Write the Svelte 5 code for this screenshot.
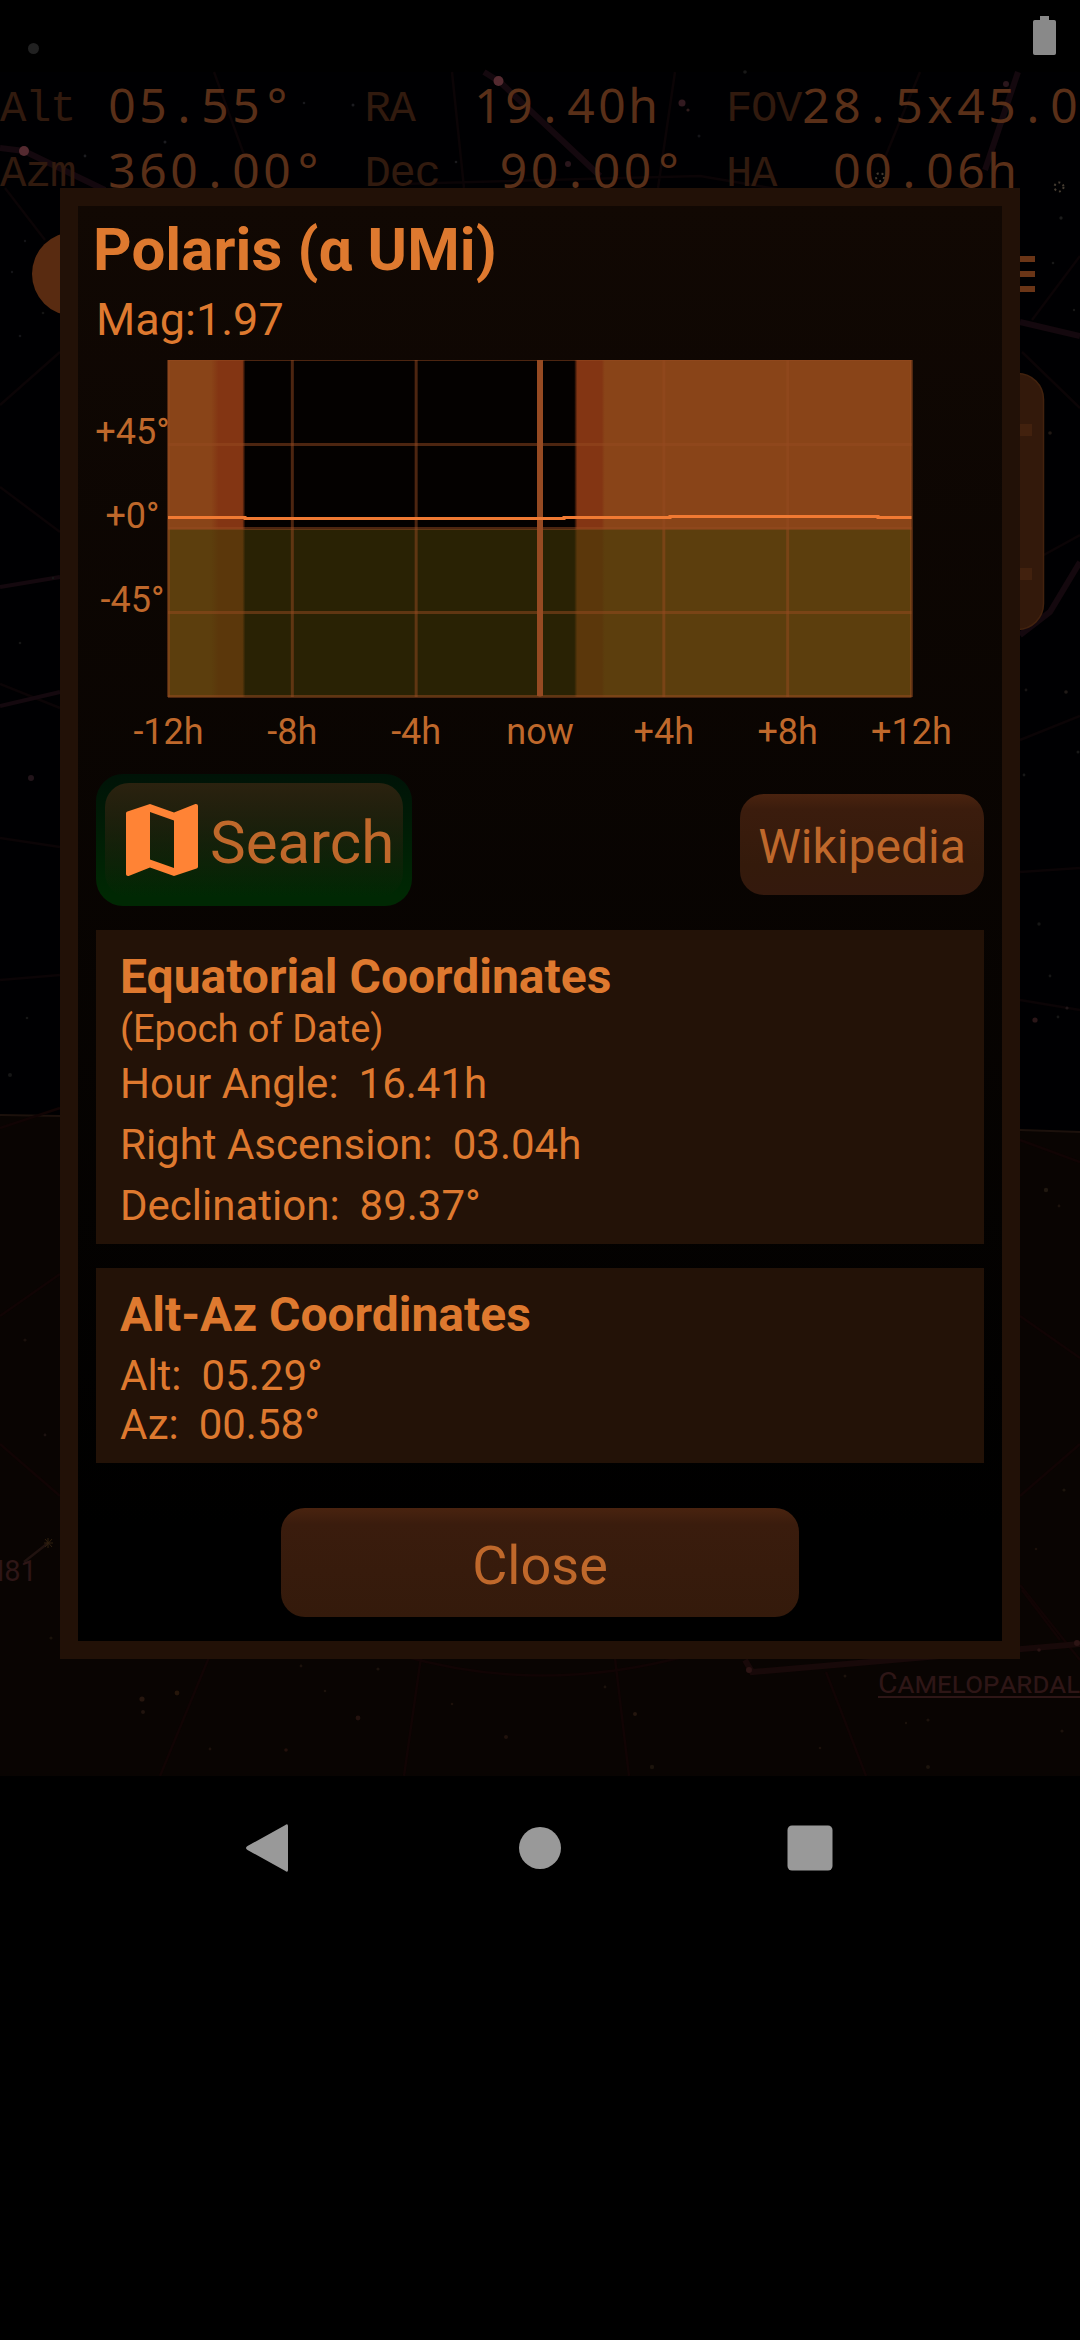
<script>
  const readouts = [
    [
      { label: 'Alt', value: '05.55°', pad: 0 },
      { label: 'RA', value: '19.40h', pad: 0 },
      { label: 'FOV', value: '28.5x45.0', pad: 0 }
    ],
    [
      { label: 'Azm', value: '360.00°', pad: 0 },
      { label: 'Dec', value: '90.00°', pad: 1 },
      { label: 'HA', value: '00.06h', pad: 1 }
    ]
  ];

  const hours = ['-12h', '-8h', '-4h', 'now', '+4h', '+8h', '+12h'].map((text, i) => ({
    text,
    x: 168.5 + i * 123.83
  }));
  const altitudes = [
    { text: '+45°', y: 444.5 },
    { text: '+0°', y: 528.5 },
    { text: '-45°', y: 612.5 }
  ];

  const equatorial = [
    ['Hour Angle:', '16.41h'],
    ['Right Ascension:', '03.04h'],
    ['Declination:', '89.37°']
  ];
  const altaz = [
    ['Alt:', '05.29°'],
    ['Az:', '00.58°']
  ];

  const stars = [
    [165, 142, 1.5, '#1c1c20'], [304, 103, 1.3, '#18181c'], [353, 105, 1.5, '#1c1c20'], [85, 156, 1.4, '#1c1c20'],
    [25, 241, 1.2, '#141418'], [12, 272, 1.2, '#141418'], [43, 313, 1.3, '#141414'], [20, 336, 1.3, '#141418'],
    [456, 162, 1.3, '#1a1a1e'], [688, 110, 1.6, '#301c1c'], [699, 136, 1.5, '#141418'], [745, 72, 1.8, '#181818'],
    [1061, 218, 1.7, '#1c1c1c'], [1053, 263, 1.3, '#181818'], [1074, 310, 1.2, '#181818'], [1050, 433, 1.8, '#201814'],
    [1066, 692, 1.8, '#201a18'], [1026, 690, 1.4, '#181414'], [1024, 775, 1.4, '#181818'], [1078, 752, 1.5, '#181818'],
    [1039, 924, 1.7, '#161616'], [1050, 976, 1.4, '#161616'], [1035, 1020, 2.6, '#2a1618'], [1067, 1008, 1.6, '#201618'],
    [1058, 1017, 1.4, '#161616'], [1046, 1190, 2.2, '#201810'], [1059, 1206, 1.4, '#1c120c'], [31, 778, 3, '#22141a'],
    [53, 578, 1.3, '#161616'], [20, 643, 1.3, '#161616'], [10, 1075, 2, '#161616'], [27, 1018, 1.3, '#161616'],
    [25, 1340, 1.6, '#1a100c'], [45, 1435, 1.4, '#1c1210'], [51, 1638, 1.6, '#1a120a'], [142, 1699, 2.6, '#26160e'],
    [177, 1693, 2.4, '#26160a'], [143, 1712, 2, '#20140e'], [358, 1718, 2.4, '#24120e'], [301, 1666, 1.4, '#1c120c'],
    [378, 1669, 1.6, '#1c120c'], [325, 1691, 1.3, '#1c120c'], [506, 1737, 2, '#20120c'], [635, 1714, 2, '#24160e'],
    [652, 1767, 2.2, '#1c140c'], [845, 1676, 1.5, '#1c120c'], [928, 1720, 1.6, '#1c120c'], [928, 1767, 2, '#1c140c'],
    [1062, 1731, 1.6, '#1c120c'], [286, 1750, 1.8, '#24100c'], [210, 1749, 1.4, '#1c100a'], [605, 1687, 1.4, '#1c120c'],
    [749, 1670, 3, '#2c1414'], [1039, 1650, 1.8, '#2a1414'], [1077, 1643, 3, '#2c1414'], [452, 1704, 1.3, '#1c100a'],
    [820, 1748, 1.3, '#1c100a'], [1036, 1549, 1.3, '#1c100a'], [1064, 1490, 1.6, '#1c140c'], [906, 1723, 1.2, '#1c120c']
  ];
</script>

{#snippet panelRows(rows)}
  {#each rows as [name, value]}
    <div class="row"><span>{name}</span><span>{value}</span></div>
  {/each}
{/snippet}

<main class="screen">
  <svg class="sky" width="1080" height="1776" viewBox="0 0 1080 1776">
    <rect y="72" width="1080" height="1704" fill="#000002" />
    <path d="M0 1115L60 1116L1020 1130L1080 1132V1776H0Z" fill="#090402" />
    <path d="M0 1115L60 1116L1020 1130L1080 1132" fill="none" stroke="#1c110c" stroke-width="2" />
    <g fill="none" stroke="#0b0406" stroke-width="2.5">
      <path d="M214 72L246 160M452 72L464 188M675 72L658 188M920 72L884 160M5 188L45 240M400 184L700 176L900 210" />
      <path d="M0 405L60 352M0 487L60 532M0 684L60 708M0 838L60 847M0 980L60 975M1032 320L1080 256M1022 352L1080 408M1020 568L1080 535M1020 740L1080 716M1020 872L1080 868M1020 1000L1080 1010" />
    </g>
    <g fill="none" stroke="#14080e" stroke-width="6">
      <path d="M0 148L24 151L105 190M484 72L500 82L600 176M1018 72L985 170M1020 322L1080 336M1020 635L1050 612L1080 562" />
      <path d="M0 587L60 577M0 706L60 692" stroke-width="4" />
    </g>
    <g fill="none" stroke="#110404" stroke-width="2.5">
      <path d="M0 1128L60 1108M0 1316L60 1274M0 1444L60 1496M1020 1140L1080 1162M1020 1316L1080 1358M1020 1496L1080 1444M1020 1585L1080 1660" />
      <path d="M212 1650L160 1776M422 1650L404 1776M614 1650L629 1776M826 1672L866 1776M400 1655Q540 1696 690 1655M1022 1590L1060 1640" />
      <path d="M745 1660L752 1672L1080 1644" stroke="#180909" stroke-width="6" />
      <path d="M24 1562L48 1543" stroke="#20120f" />
    </g>
    {#each stars as [x, y, r, fill]}
      <circle cx={x} cy={y} {r} {fill} />
    {/each}
    <g fill="#542a30">
      <circle cx="498.500" cy="81" r="5" />
      <circle cx="24" cy="151" r="5" />
      <circle cx="682" cy="103" r="3.500" fill="#321a20" />
      <circle cx="568" cy="164" r="3" fill="#2a161c" />
      <circle cx="1006" cy="84" r="3" fill="#2a161c" />
    </g>
    <g fill="none" stroke="#453c32" stroke-dasharray="2 3" stroke-width="2">
      <circle cx="1059" cy="187" r="4.500" />
      <circle cx="880" cy="177" r="4" />
    </g>
    <path d="M44 1543h9M48 1538v10M45 1539l7 8M52 1539l-7 8" stroke="#30200f" />
    <text class="label" x="-21" y="1580.500" font-size="29">M81</text>
    <g class="label">
      <text class="caps" x="878" y="1693" font-size="30">Camelopardalis</text>
      <rect x="878" y="1696" width="202" height="2" />
    </g>
    <circle cx="74" cy="274" r="42" fill="#592b11" />
    <path d="M981 259h54M981 274h54M981 289h54" stroke="#6a3517" stroke-width="6" />
    <rect x="940" y="373.500" width="103.500" height="256" rx="26" fill="#33190b" stroke="#42220e" stroke-width="1.500" />
    <path d="M1000 430h32M1000 574h32" stroke="#42210e" stroke-width="12" />
  </svg>

  <header class="status">
    <i class="dot"></i>
    <svg width="23" height="39" viewBox="0 0 23 39">
      <path d="M7 0h9v4h5.200Q23 4 23 5.800V37.200Q23 39 21.200 39H1.800Q0 39 0 37.200V5.800Q0 4 1.800 4H7Z" fill="#898989" />
    </svg>
  </header>

  <section class="hud">
    {#each readouts as line}
      <div class="hud-line">
        {#each line as item}
          <span class="key">{item.label}</span>
          <span class="val" class:indent={item.pad}>{#each item.value.split('') as ch}<b>{ch}</b>{/each}</span>
        {/each}
      </div>
    {/each}
  </section>

  <section class="dialog">
    <h1>Polaris (α UMi)</h1>
    <p class="mag">Mag:1.97</p>

    <svg class="chart" width="888" height="400" viewBox="96 360 888 400">
      <defs>
        <linearGradient id="day" gradientUnits="userSpaceOnUse" x1="168" x2="912" y1="0" y2="0">
          <stop offset="0" stop-color="#894418" />
          <stop offset=".058" stop-color="#894418" />
          <stop offset=".068" stop-color="#833513" />
          <stop offset=".1" stop-color="#833513" />
          <stop offset=".104" stop-color="#040100" />
          <stop offset=".546" stop-color="#040100" />
          <stop offset=".55" stop-color="#833513" />
          <stop offset=".583" stop-color="#833513" />
          <stop offset=".587" stop-color="#894418" />
          <stop offset="1" stop-color="#894418" />
        </linearGradient>
        <linearGradient id="ground" gradientUnits="userSpaceOnUse" x1="168" x2="912" y1="0" y2="0">
          <stop offset="0" stop-color="#5c3e0d" />
          <stop offset=".058" stop-color="#5c3e0d" />
          <stop offset=".068" stop-color="#5b370b" />
          <stop offset=".1" stop-color="#5b370b" />
          <stop offset=".104" stop-color="#292204" />
          <stop offset=".546" stop-color="#292204" />
          <stop offset=".55" stop-color="#5b370b" />
          <stop offset=".583" stop-color="#5b370b" />
          <stop offset=".587" stop-color="#5c3e0d" />
          <stop offset="1" stop-color="#5c3e0d" />
        </linearGradient>
      </defs>
      <rect x="168" y="360" width="743.500" height="169" fill="url(#day)" />
      <rect x="168" y="529" width="743.500" height="168" fill="url(#ground)" />
      <g stroke="#964a20" stroke-opacity=".5" stroke-width="3">
        {#each hours as h}
          <path d={`M${h.x} 360V697`} />
        {/each}
        {#each altitudes as a}
          <path d={`M168 ${a.y}H911.500`} />
        {/each}
        <path d="M168 696.500H911.500" />
        <path d="M168 360.500H911.500" stroke-width="1" />
      </g>
      <rect x="537" y="360" width="6" height="336" fill="#964a22" />
      <path d="M168 517.500H245V518.500H564V517.500H670V516.500H878V517.500H911.500" fill="none" stroke="#f07a33" stroke-width="3" />
      <g class="axis">
        {#each altitudes as a}
          <text x="132.500" y={a.y - 0.5}>{a.text}</text>
        {/each}
        {#each hours as h}
          <text x={h.x} y="744">{h.text}</text>
        {/each}
      </g>
    </svg>

    <div class="actions">
      <button class="search">
        <span class="face">
          <svg width="96" height="96" viewBox="0 0 24 24">
            <path fill="#ff8335" d="M20.500 3l-.16.03L15 5.100 9 3 3.360 4.900c-.21.07-.36.25-.36.48V20.500c0 .28.22.5.5.5l.16-.03L9 18.900l6 2.100 5.640-1.900c.21-.07.36-.25.36-.48V3.500c0-.28-.22-.5-.5-.5zM15 19l-6-2.110V5l6 2.110V19z" />
          </svg>
          <span>Search</span>
        </span>
      </button>
      <button class="wiki">Wikipedia</button>
    </div>

    <section class="panel equatorial">
      <h2>Equatorial Coordinates</h2>
      <p class="note">(Epoch of Date)</p>
      {@render panelRows(equatorial)}
    </section>

    <section class="panel altaz">
      <h2>Alt-Az Coordinates</h2>
      {@render panelRows(altaz)}
    </section>

    <button class="close">Close</button>
  </section>

  <nav class="nav">
    <svg width="1080" height="144" viewBox="0 1776 1080 144" fill="#999">
      <path d="M285 1825.200Q288 1823.200 288 1826V1870Q288 1872.800 285 1870.800L247.500 1850Q244.500 1848 247.500 1846Z" />
      <circle cx="540" cy="1848" r="21" />
      <rect x="787.500" y="1825.500" width="45" height="45" rx="4.500" />
    </svg>
  </nav>
</main>

<style>
  :global(body) {
    background: #000;
  }
  .screen {
    position: relative;
    width: 1080px;
    height: 2340px;
    overflow: hidden;
    background: #000;
    font-family: Roboto, sans-serif;
    color: #de792f;
    display: flex;
    flex-direction: column;
  }
  h1, h2, p {
    margin: 0;
  }
  button {
    border: 0;
    padding: 0;
    font-family: inherit;
    color: #bf682b;
  }
  svg {
    display: block;
  }
  .sky {
    position: absolute;
    left: 0;
    top: 0;
  }
  .label {
    fill: #2e1616;
  }
  .caps {
    font-variant: small-caps;
  }
  .status {
    position: relative;
    height: 72px;
    box-sizing: border-box;
    padding: 16px 24px 0 28px;
    display: flex;
    justify-content: space-between;
  }
  .dot {
    width: 11px;
    height: 11px;
    margin-top: 27px;
    border-radius: 50%;
    background: #212121;
  }
  .hud {
    position: relative;
    height: 1704px;
  }
  .hud-line {
    height: 65px;
    display: grid;
    grid-template-columns: 106.5px 258px 108px 253.5px 74.5px 279.5px;
  }
  .key {
    font: 44px/65px "Liberation Mono", monospace;
    letter-spacing: -1.4px;
    padding-top: 4.5px;
    height: 65px;
    color: #311a0e;
  }
  .val {
    display: flex;
    font: 48px/65px "Noto Sans", sans-serif;
    color: #592f18;
  }
  .val.indent {
    padding-left: 25.5px;
  }
  .val.indent:last-child {
    padding-left: 31px;
  }
  .val b {
    width: 31px;
    flex: none;
    text-align: center;
    font-weight: 400;
  }
  .dialog {
    position: absolute;
    left: 60px;
    top: 188px;
    width: 960px;
    height: 1471px;
    box-sizing: border-box;
    border: 18px solid #221107;
    padding: 8px 18px 24px;
    background: linear-gradient(#110803, #000 92%) padding-box;
    display: flex;
    flex-direction: column;
  }
  h1 {
    font-size: 60px;
    line-height: 71px;
    font-weight: 700;
    letter-spacing: 0.1px;
    margin-left: -3px;
  }
  .mag {
    font-size: 45px;
    line-height: 53px;
    margin-top: 8px;
  }
  .chart {
    margin-top: 14px;
    flex: none;
  }
  .axis {
    font-size: 36px;
    text-anchor: middle;
    fill: #bf682b;
  }
  .actions {
    margin-top: 14px;
    height: 156px;
    flex: none;
    display: flex;
    justify-content: space-between;
    align-items: flex-start;
  }
  .search {
    width: 316px;
    height: 132px;
    padding: 9px;
    border-radius: 27px;
    background: linear-gradient(#001307, #002803 92%);
  }
  .face {
    display: flex;
    height: 114px;
    border-radius: 24px;
    background: linear-gradient(#2b220f, #00280300);
    font-size: 60px;
    line-height: 120px;
  }
  .face svg {
    margin: 9px 0 0 9px;
    flex: none;
  }
  .wiki {
    width: 244px;
    height: 101px;
    margin-top: 20px;
    border-radius: 24px;
    background: linear-gradient(#4a230f, #3b1c0d 15%, #341a0b 70%, #34190d);
    font-size: 48px;
    line-height: 105px;
  }
  .panel {
    flex: none;
    box-sizing: border-box;
    padding: 18.5px 24px 0;
    background: #231207;
    font-size: 42px;
  }
  .panel h2 {
    font-size: 48px;
    line-height: 56px;
  }
  .note {
    font-size: 38px;
    line-height: 44px;
    margin: 2px 0;
  }
  .row {
    display: flex;
    gap: 20px;
  }
  .equatorial {
    height: 314px;
    line-height: 61px;
  }
  .altaz {
    height: 195px;
    margin-top: 24px;
    line-height: 49px;
  }
  .altaz h2 {
    margin-bottom: 8.5px;
  }
  .close {
    align-self: center;
    width: 518px;
    height: 109px;
    margin-top: 45px;
    border-radius: 24px;
    background: linear-gradient(#49230f, #3a1c0d 15%, #341a0b);
    font-size: 54px;
    line-height: 115px;
  }
  .nav {
    position: relative;
  }
</style>
